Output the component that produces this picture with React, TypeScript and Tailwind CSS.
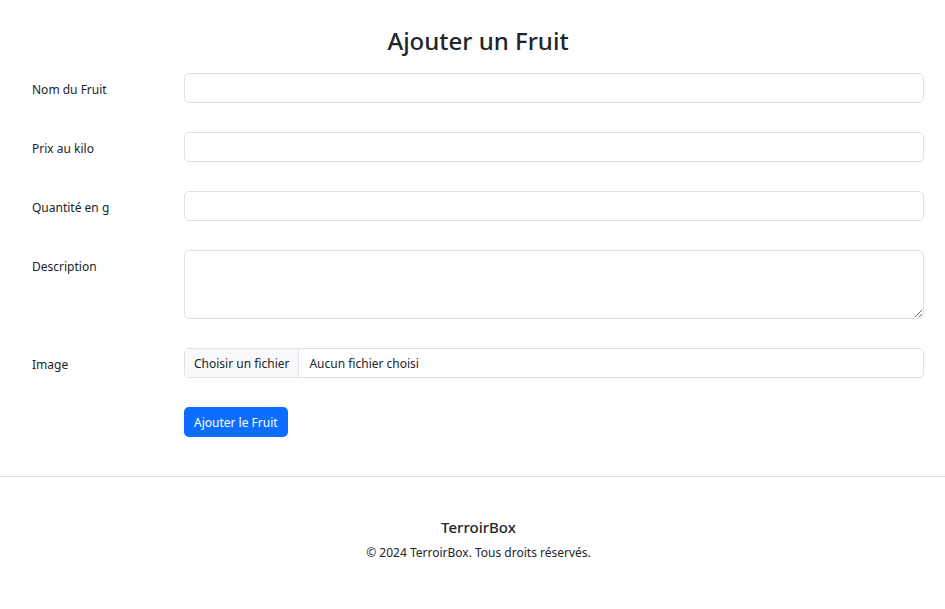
const FIELDS = ["Nom du Fruit", "Prix au kilo", "Quantité en g"];

const Label = ({ children }: { children: string }) => (
  <label className="w-[164px] shrink-0 pl-[12px] pt-[8px] text-[12px] leading-[18px]">{children}</label>
);

const App = () => {
  return (
    <div
      className="min-h-screen bg-white text-[#212529]"
      style={{ fontFamily: '"Noto Sans", "Open Sans", sans-serif' }}
    >
      <main className="pl-[20px] pr-[21px] pt-[27px]">
        <h2 className="mb-[19px] pl-[12px] text-center text-[24px] font-medium leading-[27px]">Ajouter un Fruit</h2>

        <form className="flex flex-col gap-[29px]">
          {FIELDS.map((f) => (
            <div key={f} className="flex items-start">
              <Label>{f}</Label>
              <input
                type="text"
                className="h-[30px] flex-1 rounded-[5px] border border-[#dee2e6] bg-white px-[10px] text-[12px] outline-none"
              />
            </div>
          ))}

          {/* Description */}
          <div className="flex items-start">
            <Label>Description</Label>
            <textarea className="h-[69px] flex-1 rounded-[5px] border border-[#dee2e6] bg-white px-[10px] py-[5px] text-[12px] outline-none" />
          </div>

          {/* Image */}
          <div className="flex items-start">
            <Label>Image</Label>
            <div className="flex h-[30px] flex-1 items-center overflow-hidden rounded-[5px] border border-[#dee2e6] text-[12px]">
              <span className="flex h-full items-center border-r border-[#dee2e6] bg-[#f8f9fa] px-[9px] pt-[2px]">Choisir un fichier</span>
              <span className="px-[10px] pt-[2px]">Aucun fichier choisi</span>
            </div>
          </div>

          <div className="flex">
            <div className="w-[164px] shrink-0" />
            <button
              type="button"
              className="h-[30px] rounded-[5px] bg-[#0d6efd] px-[10px] pt-[2px] text-[12px] text-white"
            >
              Ajouter le Fruit
            </button>
          </div>
        </form>
      </main>

      <footer className="mt-[39px] border-t border-[#dee2e6] pl-[12px] pt-[40px] text-center">
        <h5 className="text-[15px] font-medium leading-[20px]">TerroirBox</h5>
        <p className="mt-[7px] text-[12px] leading-[18px]">© 2024 TerroirBox. Tous droits réservés.</p>
      </footer>
    </div>
  );
};

export default App;
